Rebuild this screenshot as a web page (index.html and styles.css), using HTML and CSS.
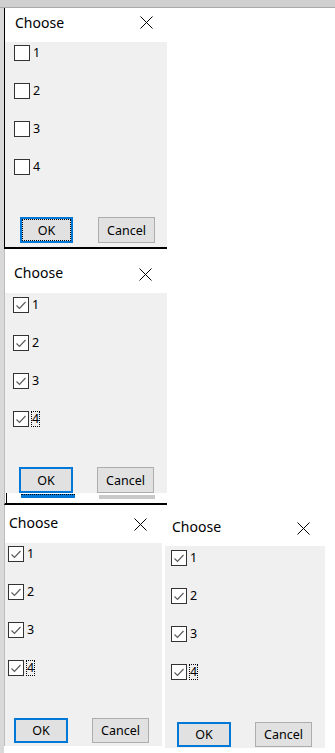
FILE: index.html
```html
<!DOCTYPE html>
<html lang="en">
<head>
  <meta charset="UTF-8" />
  <title>Choose dialogs</title>
  <link rel="stylesheet" href="styles.css">
</head>
<body>
  <div class="topbar"></div>

  <div class="desk">
    <!-- nothing ticked yet, focus on OK -->
    <div class="dlg dlg-1">
      <div class="dlg-title">
        <span class="dlg-name">Choose</span>
        <svg class="close" width="13" height="13" viewBox="0 0 13 13"><path d="M0.5 0.5L12.5 12.5M12.5 0.5L0.5 12.5" stroke="#000" stroke-width="1" fill="none"/></svg>
      </div>
      <div class="dlg-body">
        <div class="opt"><span class="box"></span><span class="num">1</span></div>
        <div class="opt"><span class="box"></span><span class="num">2</span></div>
        <div class="opt"><span class="box"></span><span class="num">3</span></div>
        <div class="opt"><span class="box"></span><span class="num">4</span></div>
        <div class="btns">
          <button class="btn btn-ok">OK</button>
          <button class="btn">Cancel</button>
        </div>
      </div>
    </div>

    <!-- all ticked -->
    <div class="dlg dlg-2">
      <div class="dlg-title">
        <span class="dlg-name">Choose</span>
        <svg class="close" width="13" height="13" viewBox="0 0 13 13"><path d="M0.5 0.5L12.5 12.5M12.5 0.5L0.5 12.5" stroke="#000" stroke-width="1" fill="none"/></svg>
      </div>
      <div class="dlg-body">
        <div class="opt"><span class="box"><svg width="14" height="14" viewBox="0 0 14 14"><path d="M2.5 7.5L5.5 10.5L11.5 4" stroke="#5c5c5c" stroke-width="1.2" fill="none"/></svg></span><span class="num">1</span></div>
        <div class="opt"><span class="box"><svg width="14" height="14" viewBox="0 0 14 14"><path d="M2.5 7.5L5.5 10.5L11.5 4" stroke="#5c5c5c" stroke-width="1.2" fill="none"/></svg></span><span class="num">2</span></div>
        <div class="opt"><span class="box"><svg width="14" height="14" viewBox="0 0 14 14"><path d="M2.5 7.5L5.5 10.5L11.5 4" stroke="#5c5c5c" stroke-width="1.2" fill="none"/></svg></span><span class="num">3</span></div>
        <div class="opt"><span class="box"><svg width="14" height="14" viewBox="0 0 14 14"><path d="M2.5 7.5L5.5 10.5L11.5 4" stroke="#5c5c5c" stroke-width="1.2" fill="none"/></svg></span><span class="num focus">4</span></div>
        <div class="btns">
          <button class="btn btn-ok">OK</button>
          <button class="btn">Cancel</button>
        </div>
      </div>
      <div class="tail">
        <span class="ghost-ok"></span>
        <span class="ghost-cancel"></span>
      </div>
    </div>

    <div class="pair">
      <div class="dlg dlg-3">
        <div class="dlg-title">
          <span class="dlg-name">Choose</span>
          <svg class="close" width="13" height="13" viewBox="0 0 13 13"><path d="M0.5 0.5L12.5 12.5M12.5 0.5L0.5 12.5" stroke="#000" stroke-width="1" fill="none"/></svg>
        </div>
        <div class="dlg-body">
          <div class="opt"><span class="box"><svg width="14" height="14" viewBox="0 0 14 14"><path d="M2.5 7.5L5.5 10.5L11.5 4" stroke="#5c5c5c" stroke-width="1.2" fill="none"/></svg></span><span class="num">1</span></div>
          <div class="opt"><span class="box"><svg width="14" height="14" viewBox="0 0 14 14"><path d="M2.5 7.5L5.5 10.5L11.5 4" stroke="#5c5c5c" stroke-width="1.2" fill="none"/></svg></span><span class="num">2</span></div>
          <div class="opt"><span class="box"><svg width="14" height="14" viewBox="0 0 14 14"><path d="M2.5 7.5L5.5 10.5L11.5 4" stroke="#5c5c5c" stroke-width="1.2" fill="none"/></svg></span><span class="num">3</span></div>
          <div class="opt"><span class="box"><svg width="14" height="14" viewBox="0 0 14 14"><path d="M2.5 7.5L5.5 10.5L11.5 4" stroke="#5c5c5c" stroke-width="1.2" fill="none"/></svg></span><span class="num focus">4</span></div>
          <div class="btns">
            <button class="btn btn-ok">OK</button>
            <button class="btn">Cancel</button>
          </div>
        </div>
      </div>

      <div class="dlg dlg-4">
        <div class="dlg-title">
          <span class="dlg-name">Choose</span>
          <svg class="close" width="13" height="13" viewBox="0 0 13 13"><path d="M0.5 0.5L12.5 12.5M12.5 0.5L0.5 12.5" stroke="#000" stroke-width="1" fill="none"/></svg>
        </div>
        <div class="dlg-body">
          <div class="opt"><span class="box"><svg width="14" height="14" viewBox="0 0 14 14"><path d="M2.5 7.5L5.5 10.5L11.5 4" stroke="#5c5c5c" stroke-width="1.2" fill="none"/></svg></span><span class="num">1</span></div>
          <div class="opt"><span class="box"><svg width="14" height="14" viewBox="0 0 14 14"><path d="M2.5 7.5L5.5 10.5L11.5 4" stroke="#5c5c5c" stroke-width="1.2" fill="none"/></svg></span><span class="num">2</span></div>
          <div class="opt"><span class="box"><svg width="14" height="14" viewBox="0 0 14 14"><path d="M2.5 7.5L5.5 10.5L11.5 4" stroke="#5c5c5c" stroke-width="1.2" fill="none"/></svg></span><span class="num">3</span></div>
          <div class="opt"><span class="box"><svg width="14" height="14" viewBox="0 0 14 14"><path d="M2.5 7.5L5.5 10.5L11.5 4" stroke="#5c5c5c" stroke-width="1.2" fill="none"/></svg></span><span class="num focus">4</span></div>
          <div class="btns">
            <button class="btn btn-ok">OK</button>
            <button class="btn">Cancel</button>
          </div>
        </div>
      </div>
    </div>
  </div>
</body>
</html>
```

FILE: styles.css
```css
* {
  box-sizing: border-box;
}
body {
  margin: 0;
  background: #fff;
  color: #000;
  font-family: "Noto Sans", "Open Sans", sans-serif;
}
.topbar {
  height: 8px;
  background: #d0d0d0;
  border-bottom: 1px solid #a9a9a9;
}
.desk {
  border-left: 4px solid #d9d9d9;
  height: 745px;
  overflow: hidden;
}

/* dialog frame */
.dlg {
  background: #fff;
  border-left: 1px solid #bdbdbd;
}
.dlg-title {
  display: flex;
  align-items: flex-start;
}
.dlg-name {
  font-size: 14px;
  line-height: 19px;
}
.close {
  margin-left: auto;
  margin-top: 5px;
}
.dlg-body {
  background: #f0f0f0;
  display: flex;
  flex-direction: column;
  gap: 22px;
}

/* options */
.opt {
  display: flex;
  align-items: center;
  height: 16px;
  font-size: 12.5px;
}
.box {
  width: 16px;
  height: 16px;
  border: 1px solid #333;
  background: #fff;
  display: flex;
}
.num {
  margin-left: 2px;
  line-height: 14px;
  border: 1px dotted transparent;
}
.num.focus {
  border-color: #000;
}

/* buttons */
.btns {
  display: flex;
  margin-top: auto;
  gap: 24px;
}
.btn {
  font-family: inherit;
  font-size: 12.5px;
  color: #000;
  width: 57px;
  height: 25px;
  padding: 0;
  background: #e1e1e1;
  border: 1px solid #adadad;
}
.btn-ok {
  width: 54px;
  border: 2px solid #0078d7;
}

/* first shot */
.dlg-1 {
  width: 163px;
  border-left-color: #000;
  border-bottom: 2px solid #000;
}
.dlg-1 .dlg-title {
  height: 34px;
  padding: 5px 14px 0 10px;
}
.dlg-1 .close {
  margin-top: 3px;
}
.dlg-1 .dlg-body {
  height: 205px;
  padding: 3px 0 4px;
}
.dlg-1 .opt {
  margin-left: 9px;
}
.dlg-1 .btns {
  margin-left: 15px;
  gap: 25px;
}
.dlg-1 .btn {
  height: 26px;
}
.dlg-1 .btn-ok {
  width: 53px;
  outline: 1px dotted #000;
  outline-offset: -3px;
}

/* second shot */
.dlg-2 {
  width: 163px;
  border-bottom: 2px solid #000;
}
.dlg-2 .dlg-title {
  height: 44px;
  padding: 14px 15px 0 9px;
}
.dlg-2 .dlg-body {
  height: 200px;
  padding: 4px 0 0;
}
.dlg-2 .opt {
  margin-left: 8px;
}
.dlg-2 .btns {
  margin-left: 14px;
}
.dlg-2 .btn {
  height: 26px;
}
.tail {
  height: 10px;
  margin-left: 1px;
  border-left: 1px solid #000;
  display: flex;
  align-items: flex-start;
  padding-top: 1px;
}
.ghost-ok {
  margin-left: 14px;
  width: 54px;
  height: 4px;
  background: #0078d7;
  border-top: 1px dotted #000;
}
.ghost-cancel {
  margin-left: 24px;
  width: 56px;
  height: 4px;
  margin-top: 1px;
  background: #c9c9c9;
}

/* bottom pair */
.pair {
  display: flex;
  align-items: flex-start;
  gap: 3px;
}
.dlg-3 {
  width: 158px;
}
.dlg-3 .dlg-title {
  height: 38px;
  padding: 8px 15px 0 4px;
}
.dlg-3 .dlg-body {
  height: 203px;
  padding: 3px 0 3px;
}
.dlg-3 .opt {
  margin-left: 3px;
}
.dlg-3 .btns {
  margin-left: 9px;
}
.dlg-4 {
  width: 160px;
  border-left: 0;
}
.dlg-4 .dlg-title {
  height: 41px;
  padding: 12px 15px 0 7px;
}
.dlg-4 .dlg-body {
  height: 202px;
  padding: 4px 0 1px;
}
.dlg-4 .opt {
  margin-left: 6px;
}
.dlg-4 .btns {
  margin-left: 12px;
}
```
